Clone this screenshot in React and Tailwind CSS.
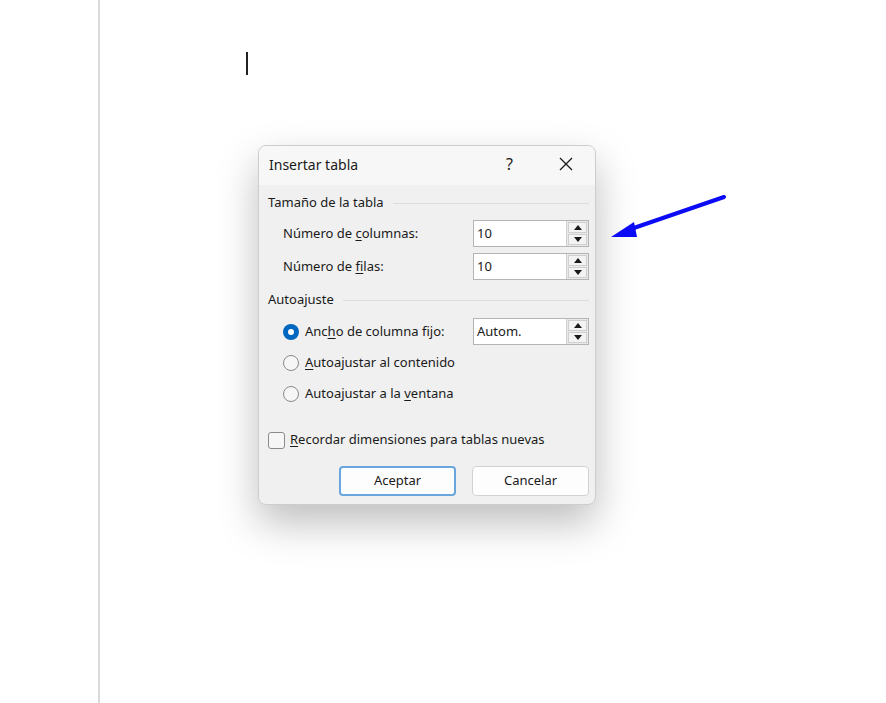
import React from "react";

const font = { fontFamily: '"Noto Sans", "Open Sans", sans-serif' };

function U({ children }) {
  return <span className="underline underline-offset-2 decoration-1">{children}</span>;
}

function Tri({ up }) {
  return (
    <svg width="8" height="5" viewBox="0 0 8 5" className="block">
      {up ? <polygon points="0,5 8,5 4,0" fill="#1a1a1a" /> : <polygon points="0,0 8,0 4,5" fill="#1a1a1a" />}
    </svg>
  );
}

function Spin({ value }) {
  return (
    <div className="w-[116px] h-[27px] border border-[#b4b4b4] bg-white flex">
      <div className="flex-1 flex items-center pl-[3px] text-[13px] text-[#1a1a1a]">{value}</div>
      <div className="w-[22px] border-l border-[#d0d0d0] bg-[#e9e9e9] flex flex-col p-[1px] gap-[1px]">
        <div className="flex-1 bg-[#f3f3f3] border border-[#cfcfcf] flex items-center justify-center"><Tri up /></div>
        <div className="flex-1 bg-[#f3f3f3] border border-[#cfcfcf] flex items-center justify-center"><Tri /></div>
      </div>
    </div>
  );
}

function GroupHeader({ children }) {
  return (
    <div className="h-[20px] flex items-center">
      <span className="text-[13px] text-[#1a1a1a] whitespace-nowrap">{children}</span>
      <div className="flex-1 h-px bg-[#dcdcdc] ml-[9px]" />
    </div>
  );
}

function Radio({ checked }) {
  return checked ? (
    <div className="w-[16px] h-[16px] rounded-full bg-[#0067c0] flex items-center justify-center">
      <div className="w-[6px] h-[6px] rounded-full bg-white" />
    </div>
  ) : (
    <div className="w-[16px] h-[16px] rounded-full border border-[#8a8a8a] bg-[#f6f6f6]" />
  );
}

export default function App() {
  return (
    <div className="w-[886px] h-[703px] bg-white relative overflow-hidden flex" style={font}>
      <div className="w-[98px] shrink-0" />
      <div className="w-[2px] shrink-0 bg-[#d9d9d9]" />
      <div className="flex-1 flex flex-col">
        <div className="ml-[146px] mt-[52px] w-[2px] h-[23px] bg-[#222]" />
        <div className="ml-[158px] mt-[70px] w-[338px] h-[360px] rounded-[8px] border border-[#cdcdcd] bg-[#f0f0f0] overflow-hidden flex flex-col shadow-[0_18px_40px_rgba(0,0,0,0.26)]">
          {/* title bar */}
          <div className="h-[39px] bg-[#f7f7f7] flex items-center pl-[10px] shrink-0">
            <span className="text-[14px] text-[#1a1a1a] mb-[3px]">Insertar tabla</span>
            <div className="flex-1" />
            <span className="text-[16px] text-[#1a1a1a] mr-[46px] mb-[3px]">?</span>
            <svg width="14" height="14" viewBox="0 0 14 14" className="mr-[22px] mb-[3px]">
              <path d="M1 1 L13 13 M13 1 L1 13" stroke="#1a1a1a" strokeWidth="1.3" />
            </svg>
          </div>
          {/* body */}
          <div className="flex-1 flex flex-col pl-[9px] pr-[6px] pt-[8px] text-[13px] text-[#1a1a1a]">
            <GroupHeader>Tamaño de la tabla</GroupHeader>
            <div className="mt-[7px] flex items-center justify-between pl-[15px]">
              <span>Número de <U>c</U>olumnas:</span>
              <Spin value="10" />
            </div>
            <div className="mt-[6px] flex items-center justify-between pl-[15px]">
              <span>Número de <U>f</U>ilas:</span>
              <Spin value="10" />
            </div>
            <div className="mt-[10px]">
              <GroupHeader>Autoajuste</GroupHeader>
            </div>
            <div className="mt-[8px] flex items-center justify-between pl-[15px]">
              <div className="flex items-center gap-[6px]">
                <Radio checked />
                <span>Anc<U>h</U>o de columna fijo:</span>
              </div>
              <Spin value="Autom." />
            </div>
            <div className="mt-[5px] h-[26px] flex items-center gap-[6px] pl-[15px]">
              <Radio />
              <span><U>A</U>utoajustar al contenido</span>
            </div>
            <div className="mt-[5px] h-[26px] flex items-center gap-[6px] pl-[15px]">
              <Radio />
              <span>Autoajustar a la <U>v</U>entana</span>
            </div>
            <div className="mt-[24px] h-[18px] flex items-center gap-[5px]">
              <div className="w-[17px] h-[17px] rounded-[3px] border border-[#8a8a8a] bg-[#f6f6f6]" />
              <span><U>R</U>ecordar dimensiones para tablas nuevas</span>
            </div>
            <div className="mt-[17px] flex justify-end gap-[16px]">
              <div className="w-[117px] h-[30px] rounded-[4px] border-2 border-[#6aa6dd] bg-[#fdfdfd] flex items-center justify-center">Aceptar</div>
              <div className="w-[117px] h-[30px] rounded-[4px] border border-[#d2d2d2] bg-[#fdfdfd] flex items-center justify-center">Cancelar</div>
            </div>
          </div>
        </div>
      </div>
      <svg className="absolute left-0 top-0 pointer-events-none" width="886" height="703">
        <line x1="724" y1="197" x2="628" y2="230" stroke="#0b0bf5" strokeWidth="4" strokeLinecap="round" />
        <polygon points="611,237 634,222 637,237" fill="#0b0bf5" />
      </svg>
    </div>
  );
}
